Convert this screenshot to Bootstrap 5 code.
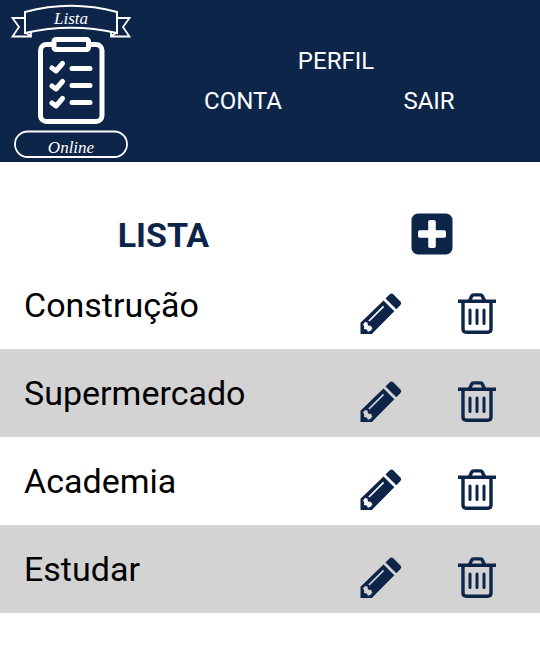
<!DOCTYPE html>
<html lang="pt-BR">
<head>
<meta charset="utf-8">
<meta name="viewport" content="width=device-width, initial-scale=1">
<title>Lista Online</title>
<link href="https://cdn.jsdelivr.net/npm/bootstrap@5.3.0/dist/css/bootstrap.min.css" rel="stylesheet">
<style>
  :root { --navy: #0c2549; }
  body { font-family: Roboto, "Liberation Sans", sans-serif; color: #000; background: #fff; }
  .site-header { background: var(--navy); height: 162px; padding-right: 18px; }
  .brand-link { width: 150px; }
  .site-nav { display: grid; grid-template-columns: 1fr 1fr; font-size: 24px; line-height: 40px; padding-top: 41px; }
  .site-nav a { color: #fff; }
  .site-nav .wide { grid-column: span 2; }
  .title-row { height: 99px; padding: 45px 0 0 2px; }
  .title-col { width: 60%; }
  .action-col { width: 40%; }
  .page-title { color: var(--navy); font-size: 34px; line-height: 56px; font-weight: 700; }
  .entry { height: 88px; }
  .entry:nth-child(even) { background: #d3d3d3; }
  .entry-name { font-size: 34px; line-height: 88px; padding-left: 24px; }
  .entry-actions { gap: 56px; padding: 32px 8px 0 0; }
  .icon-btn { color: var(--navy); line-height: 0; }
  .logo-word { font: italic 17px "Liberation Serif", serif; fill: #fff; }
</style>
</head>
<body>
<svg class="d-none" xmlns="http://www.w3.org/2000/svg">
  <symbol id="pencil" viewBox="0 0 42 42">
    <path fill="currentColor" fill-rule="evenodd" d="M23.500 7.500 L34.300 18.300 L11.800 41 H0.500 V29.700 Z M8.300 27.400 L9.500 28.600 L24.200 13.900 L23 12.700 Z M5.200 29 L3 31.200 L4.300 33.800 L4 36 L6.800 36.600 L8 38.700 L10.200 38 L12.300 35.800 L11.200 33 L8 32.400 L7.400 29.500 Z"/>
    <path fill="currentColor" d="M25.500 5.500 L29.500 1.500 Q31.500 -.3 33.500 1.500 L40.200 8.200 Q42 10.200 40.200 12.200 L36.300 16.300 Z"/>
  </symbol>
  <symbol id="trash" viewBox="0 0 38 42">
    <g fill="none" stroke="currentColor" stroke-width="3.400">
      <path d="M0 8.200 H38"/>
      <path d="M11.600 7.500 L13.600 3.200 Q14.200 1.900 15.600 1.900 H22.400 Q23.800 1.900 24.400 3.200 L26.400 7.500"/>
      <path d="M5 9 V36 Q5 39.200 8.500 39.200 H29.500 Q33 39.200 33 36 V9"/>
      <path stroke-width="3" stroke-linecap="round" d="M12 17 V30.500 M19 17 V30.500 M26 17 V30.500"/>
    </g>
  </symbol>
</svg>

<header class="site-header d-flex">
  <a class="brand-link flex-shrink-0" href="#" aria-label="Lista Online">
    <svg width="150" height="162" viewBox="0 0 150 162">
      <g fill="none" stroke="#fff" stroke-width="1.800">
        <path d="M25 18 H12.500 L19 27 L12.500 36.500 H31 V32 M26 33 L31 36"/>
        <path d="M117 18 H129.500 L123 27 L129.500 36.500 H111 V32 M116 33 L111 36"/>
        <path stroke-width="2" d="M25 12 Q71 -.5 117 12 V33 Q71 22.500 25 33 Z"/>
        <rect x="15" y="131.500" width="112" height="25.500" rx="12.700"/>
      </g>
      <rect x="40.500" y="44.500" width="61.500" height="77" rx="6" fill="none" stroke="#fff" stroke-width="5"/>
      <rect x="54" y="39.500" width="34.500" height="10" rx="2" fill="#0c2549" stroke="#fff" stroke-width="5"/>
      <g fill="none" stroke="#fff" stroke-width="5" stroke-linecap="round">
        <path d="M72 68.500 H90 M72 85.500 H90 M72 102.500 H90"/>
        <path stroke-width="5" stroke-linejoin="round" d="M52 68 L56 71 L62.500 63.500 M52 86 L56 89 L62.500 81.500 M52 103 L56 106 L62.500 98.500"/>
      </g>
      <text class="logo-word" x="71" y="24" text-anchor="middle">Lista</text>
      <text class="logo-word" x="71" y="153" text-anchor="middle">Online</text>
    </svg>
  </a>
  <nav class="site-nav flex-grow-1 text-center align-content-start">
    <a class="wide text-decoration-none" href="#">PERFIL</a>
    <a class="text-decoration-none" href="#">CONTA</a>
    <a class="text-decoration-none" href="#">SAIR</a>
  </nav>
</header>

<main>
  <div class="title-row d-flex">
    <div class="title-col text-center"><h1 class="page-title mb-0">LISTA</h1></div>
    <div class="action-col text-center">
      <button class="icon-btn btn p-0 border-0 mt-1" type="button" aria-label="Adicionar">
        <svg width="42" height="46" viewBox="0 0 42 46"><rect x=".5" y="2.500" width="41" height="41" rx="6.500" fill="currentColor"/><rect x="17.200" y="9" width="7.600" height="28" rx="1.800" fill="#fff"/><rect x="7" y="19.200" width="28" height="7.600" rx="1.800" fill="#fff"/></svg>
      </button>
    </div>
  </div>
  <ul class="list-unstyled mb-0">
    <li class="entry d-flex">
      <div class="title-col entry-name">Construção</div>
      <div class="action-col entry-actions d-flex justify-content-center align-items-start">
        <button class="icon-btn btn p-0 border-0" type="button" aria-label="Editar Construção"><svg width="42" height="42"><use href="#pencil"/></svg></button>
        <button class="icon-btn btn p-0 border-0" type="button" aria-label="Excluir Construção"><svg width="38" height="42"><use href="#trash"/></svg></button>
      </div>
    </li>
    <li class="entry d-flex">
      <div class="title-col entry-name">Supermercado</div>
      <div class="action-col entry-actions d-flex justify-content-center align-items-start">
        <button class="icon-btn btn p-0 border-0" type="button" aria-label="Editar Supermercado"><svg width="42" height="42"><use href="#pencil"/></svg></button>
        <button class="icon-btn btn p-0 border-0" type="button" aria-label="Excluir Supermercado"><svg width="38" height="42"><use href="#trash"/></svg></button>
      </div>
    </li>
    <li class="entry d-flex">
      <div class="title-col entry-name">Academia</div>
      <div class="action-col entry-actions d-flex justify-content-center align-items-start">
        <button class="icon-btn btn p-0 border-0" type="button" aria-label="Editar Academia"><svg width="42" height="42"><use href="#pencil"/></svg></button>
        <button class="icon-btn btn p-0 border-0" type="button" aria-label="Excluir Academia"><svg width="38" height="42"><use href="#trash"/></svg></button>
      </div>
    </li>
    <li class="entry d-flex">
      <div class="title-col entry-name">Estudar</div>
      <div class="action-col entry-actions d-flex justify-content-center align-items-start">
        <button class="icon-btn btn p-0 border-0" type="button" aria-label="Editar Estudar"><svg width="42" height="42"><use href="#pencil"/></svg></button>
        <button class="icon-btn btn p-0 border-0" type="button" aria-label="Excluir Estudar"><svg width="38" height="42"><use href="#trash"/></svg></button>
      </div>
    </li>
  </ul>
</main>
<script src="https://cdn.jsdelivr.net/npm/bootstrap@5.3.0/dist/js/bootstrap.bundle.min.js"></script>
</body>
</html>
